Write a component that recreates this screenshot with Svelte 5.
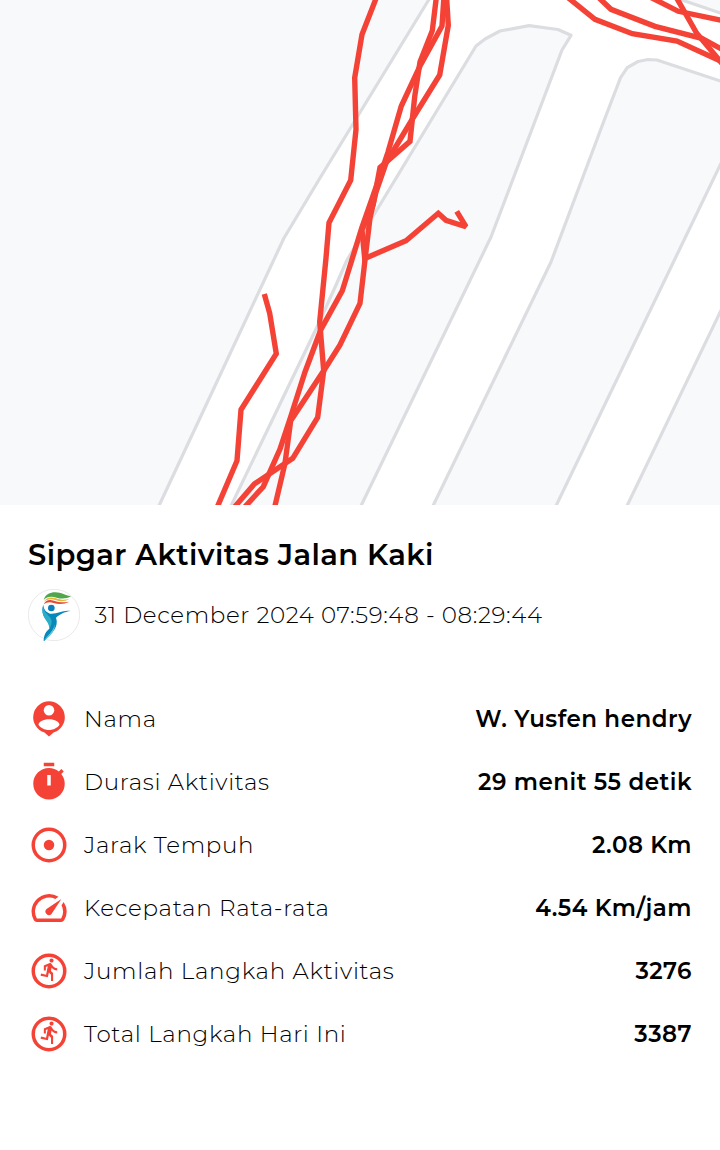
<script lang="ts">
  type Icon = 'person' | 'timer' | 'target' | 'speed' | 'run';

  const title = 'Sipgar Aktivitas Jalan Kaki';
  const period = '31 December 2024 07:59:48 - 08:29:44';

  const stats: { icon: Icon; label: string; value: string }[] = [
    { icon: 'person', label: 'Nama', value: 'W. Yusfen hendry' },
    { icon: 'timer', label: 'Durasi Aktivitas', value: '29 menit 55 detik' },
    { icon: 'target', label: 'Jarak Tempuh', value: '2.08 Km' },
    { icon: 'speed', label: 'Kecepatan Rata-rata', value: '4.54 Km/jam' },
    { icon: 'run', label: 'Jumlah Langkah Aktivitas', value: '3276' },
    { icon: 'run', label: 'Total Langkah Hari Ini', value: '3387' }
  ];

  // Land between the streets
  const blocks = [
    '-5,-5 432,-5 428,1 320,178 284,238 200,418 157,510 -5,510',
    '229,510 316.5,328 336,285 347,260 375,213 476,46 485,39 500,31 529,25.6 558,29.5 571,35.3 562,50 540,108 491,237 359,510',
    '431,510 551,262 604.3,120 620.7,77.3 627.3,67.7 638,61.5 648,59.5 657,60 725,82.5 725,155 554,510',
    '625,510 725,302 725,510',
    '667,-5 725,14.5 725,-5'
  ];

  // Recorded GPS track
  const tracks = [
    '377,-4 362,34.5 354.7,77.7 356,129.5 350.7,180.3 329,222.7 326,258 319.7,321.7 323.7,370.7 317.7,417.3 292.7,458.3 254.3,484 232,510',
    '436.5,-4 432.3,30.7 420,62 414.7,96.7 410,141.3 386.7,161.7 380,167.5 373,205 362,230 364.7,258.5 406,240.7 438.3,213.3 446,220.3 466,226.7 456.7,211.3',
    '444,-4 442,26 420,66 401.3,106 388,152 382,170 361.7,228 354,253 342.3,290.7 320.7,330 305,372 290.7,416.7 280,449 263.3,486.7 242,510',
    '446.5,-4 448.3,25.3 439.7,75 413,118 386,163 376,192 370,218 365,260 360,303.3 340,345 323.7,370.7 290.7,420.7 285,463.3 274,510',
    '264.3,294 269.7,313.3 276.3,353.7 241,409.7 237,460.7 216,510',
    '566,-4 595,19.3 632.3,33.7 677,41 725,63',
    '597,-4 611,9.3 655,26.3 701.7,38.3 725,51',
    '648,-4 678.3,11.3 725,21',
    '675.5,-4 696.7,33.3 725,67'
  ];
</script>

<main class="activity">
  <svg class="map" viewBox="0 0 720 505" aria-hidden="true">
    {#each blocks as points}
      <polygon class="block" {points} />
    {/each}
    {#each tracks as points}
      <polyline class="track" {points} />
    {/each}
  </svg>

  <section class="details">
    <h1>{title}</h1>

    <div class="period">
      <svg class="avatar" viewBox="24 27 156 156" aria-hidden="true">
        <circle cx="102" cy="105" r="77" fill="#fff" stroke="#dedede" stroke-width="2" />
        <path d="M71 60C78 38 99 34 122 39c12 3 21 9 31 10-13 8-29 8-43 4-16-4-29-4-39 7z" fill="#4fa64b" />
        <path d="M71 66c8-15 23-16 37-11 14 5 26 6 40 2-13 8-27 8-40 4-14-5-27-5-37 5z" fill="#e9b83b" />
        <path d="M71 73c6-13 17-16 31-11 15 5 28 6 46 3-15 8-33 8-47 4-12-4-21-3-30 4z" fill="#e34b35" />
        <circle cx="94" cy="84" r="10" fill="#087fba" />
        <path d="M70 74c1 14 8 22 20 27 23 2 38-12 62-8-19 2-34 11-44 20 5 14 2 28-10 43-8 10-18 18-27 29 0-18 5-29 17-39 4-11-3-19-11-29-9-12-13-27-7-43z" fill="#0788bb" />
        <path d="M70 77c0 17 11 24 20 35 7 9 7 20-2 34 0-12-6-20-13-30-8-12-10-26-5-39z" fill="#2badc9" />
        <path d="M73 181c9-15 25-24 32-48-2 25-15 36-32 48z" fill="#65c5d2" />
      </svg>
      <span>{period}</span>
    </div>

    <ul class="stats">
      {#each stats as stat}
        <li>
          <svg class="icon" viewBox="0 0 24 24" aria-hidden="true">
            {#if stat.icon === 'person'}
              <path d="M12 1.9a9.1 9.1 0 0 0-2.6 17.8L12 22l2.6-2.3A9.1 9.1 0 0 0 12 1.9z" />
              <circle class="cutout" cx="12" cy="7" r="3" />
              <path class="cutout" d="M12 12.1c-3.3 0-6 1.5-6 3.2 1.2 1.8 3.5 3 6 3s4.8-1.2 6-3c0-1.7-2.7-3.2-6-3.2z" />
            {:else if stat.icon === 'timer'}
              <path
                fill-rule="evenodd"
                d="M15 1H9v2h6V1zm-4 13h2V8h-2v6zm8.03-6.61l1.42-1.42c-.43-.51-.9-.99-1.41-1.41l-1.42 1.42C16.07 4.74 14.12 4 12 4c-4.97 0-9 4.03-9 9s4.02 9 9 9 9-4.03 9-9c0-2.12-.74-4.07-1.97-5.61z"
              />
            {:else if stat.icon === 'target'}
              <circle class="ring" cx="12" cy="12" r="9" />
              <circle cx="12" cy="12" r="3" />
            {:else if stat.icon === 'speed'}
              <path d="M20.38 8.57l-1.23 1.85a8 8 0 0 1-.22 7.58H5.07A8 8 0 0 1 15.58 6.85l1.85-1.23A10 10 0 0 0 3.35 19a2 2 0 0 0 1.72 1h13.85a2 2 0 0 0 1.74-1 10 10 0 0 0-.27-10.44zm-9.79 6.84a2 2 0 0 0 2.83 0l5.66-8.49-8.49 5.66a2 2 0 0 0 0 2.83z" />
            {:else}
              <circle class="ring" cx="12" cy="12" r="9" />
              <path
                transform="translate(5.5 3.9) scale(0.59 0.6)"
                d="M13.49 5.48c1.1 0 2-.9 2-2s-.9-2-2-2-2 .9-2 2 .9 2 2 2zm-3.6 13.9l1-4.4 2.1 2v6h2v-7.5l-2.1-2 .6-3c1.3 1.5 3.3 2.5 5.5 2.5v-2c-1.9 0-3.5-1-4.3-2.4l-1-1.6c-.4-.6-1-1-1.7-1-.3 0-.5.1-.8.1l-5.2 2.2v4.7h2v-3.4l1.8-.7-1.6 8.1-4.9-1-.4 2 7 1.4z"
              />
            {/if}
          </svg>
          <span class="label">{stat.label}</span>
          <strong>{stat.value}</strong>
        </li>
      {/each}
    </ul>
  </section>
</main>

<style>
  :global(body) {
    margin: 0;
    background: #fff;
  }

  .activity {
    width: 720px;
    height: 1150px;
    overflow: hidden;
    background: #fff;
    color: #000;
    font-family: Montserrat, Inter, sans-serif;
  }

  .map {
    display: block;
    width: 720px;
    height: 505px;
    background: #fff;
  }

  .block {
    fill: #f8f9fb;
    stroke: #dcdde1;
    stroke-width: 3.2;
    stroke-linejoin: round;
  }

  .track {
    fill: none;
    stroke: #f44336;
    stroke-width: 5.4;
    stroke-linejoin: miter;
    stroke-miterlimit: 2;
  }

  .details {
    padding: 30px 28px 0;
  }

  h1 {
    margin: 0;
    font-size: 29px;
    font-weight: 600;
    line-height: 40px;
    letter-spacing: 0.42px;
    white-space: nowrap;
  }

  .period {
    display: flex;
    align-items: center;
    gap: 14.5px;
    height: 52px;
    margin-top: 14px;
    font-size: 23px;
    font-weight: 350;
    letter-spacing: 0.62px;
    white-space: nowrap;
  }

  .avatar {
    width: 52px;
    height: 52px;
  }

  .stats {
    display: flex;
    flex-direction: column;
    gap: 21px;
    margin: 57px 0 0;
    padding: 0;
    list-style: none;
  }

  li {
    display: flex;
    align-items: center;
    height: 42px;
    font-size: 23px;
    white-space: nowrap;
  }

  .icon {
    width: 42px;
    height: 42px;
    margin-right: 14px;
    fill: #f44336;
  }

  .cutout {
    fill: #fff;
  }

  .ring {
    fill: none;
    stroke: #f44336;
    stroke-width: 2;
  }

  .label {
    font-weight: 350;
    letter-spacing: 0.7px;
  }

  strong {
    margin-left: auto;
    font-weight: 600;
    letter-spacing: 0.5px;
  }
</style>
